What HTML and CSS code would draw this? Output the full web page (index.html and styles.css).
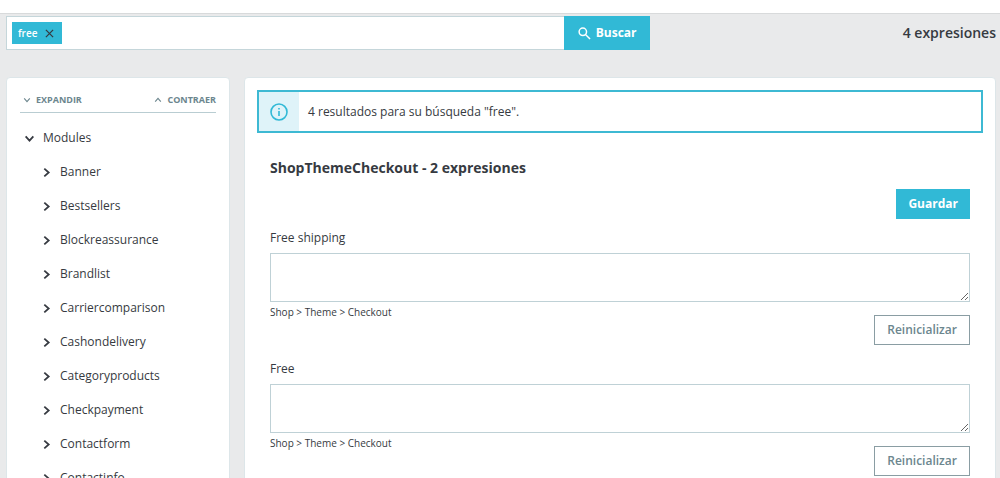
FILE: index.html
```html
<!DOCTYPE html>
<html lang="es">
<head>
    <meta charset="utf-8">
    <meta name="viewport" content="width=device-width, initial-scale=1">
    <title>Traducciones</title>
    <link rel="stylesheet" href="styles.css">
</head>
<body>
    <!-- Shared icon shapes -->
    <svg class="sprite" aria-hidden="true">
        <symbol id="chevron" viewBox="0 0 10 10">
            <path d="M3 1.5 L7 5 L3 8.5"/>
        </symbol>
    </svg>

    <header class="topbar"></header>

    <main class="page">
        <div class="toolbar">
            <form class="search">
                <div class="tags">
                    <span class="tag">free
                        <button type="button" class="tag-close" aria-label="Quitar free">
                            <svg viewBox="0 0 10 10"><path d="M1 1 L9 9 M9 1 L1 9"/></svg>
                        </button>
                    </span>
                    <input class="tags-input" type="text" aria-label="Buscar expresiones">
                </div>
                <button type="button" class="btn btn-primary btn-search">
                    <svg class="icon-search" viewBox="0 0 14 14"><circle cx="5.2" cy="5.2" r="4"/><path d="M8.3 8.3 L13 13"/></svg>
                    Buscar
                </button>
            </form>
            <p class="total">4 expresiones</p>
        </div>

        <div class="columns">
            <nav class="card sidebar">
                <div class="tree-header">
                    <button type="button" class="tree-toggle"><svg class="chevron down"><use href="#chevron"/></svg>Expandir</button>
                    <button type="button" class="tree-toggle"><svg class="chevron up"><use href="#chevron"/></svg>Contraer</button>
                </div>
                <button type="button" class="tree-item"><svg class="chevron down"><use href="#chevron"/></svg>Modules</button>
                <ul class="tree">
                    <li><button type="button" class="tree-item"><svg class="chevron"><use href="#chevron"/></svg>Banner</button></li>
                    <li><button type="button" class="tree-item"><svg class="chevron"><use href="#chevron"/></svg>Bestsellers</button></li>
                    <li><button type="button" class="tree-item"><svg class="chevron"><use href="#chevron"/></svg>Blockreassurance</button></li>
                    <li><button type="button" class="tree-item"><svg class="chevron"><use href="#chevron"/></svg>Brandlist</button></li>
                    <li><button type="button" class="tree-item"><svg class="chevron"><use href="#chevron"/></svg>Carriercomparison</button></li>
                    <li><button type="button" class="tree-item"><svg class="chevron"><use href="#chevron"/></svg>Cashondelivery</button></li>
                    <li><button type="button" class="tree-item"><svg class="chevron"><use href="#chevron"/></svg>Categoryproducts</button></li>
                    <li><button type="button" class="tree-item"><svg class="chevron"><use href="#chevron"/></svg>Checkpayment</button></li>
                    <li><button type="button" class="tree-item"><svg class="chevron"><use href="#chevron"/></svg>Contactform</button></li>
                    <li><button type="button" class="tree-item"><svg class="chevron"><use href="#chevron"/></svg>Contactinfo</button></li>
                </ul>
            </nav>

            <section class="card content">
                <div class="alert">
                    <div class="alert-icon">
                        <svg viewBox="0 0 18 18"><circle cx="9" cy="9" r="8"/><path d="M9 8 V13 M9 5 V6.6"/></svg>
                    </div>
                    <p class="alert-text">4 resultados para su búsqueda "free".</p>
                </div>

                <form class="translations">
                    <h1 class="title">ShopThemeCheckout - 2 expresiones</h1>
                    <div class="actions">
                        <button type="button" class="btn btn-primary">Guardar</button>
                    </div>

                    <div class="field">
                        <label for="free-shipping">Free shipping</label>
                        <textarea id="free-shipping"></textarea>
                        <div class="field-footer">
                            <small>Shop &gt; Theme &gt; Checkout</small>
                            <button type="button" class="btn btn-outline">Reinicializar</button>
                        </div>
                    </div>

                    <div class="field">
                        <label for="free">Free</label>
                        <textarea id="free"></textarea>
                        <div class="field-footer">
                            <small>Shop &gt; Theme &gt; Checkout</small>
                            <button type="button" class="btn btn-outline">Reinicializar</button>
                        </div>
                    </div>
                </form>
            </section>
        </div>
    </main>
</body>
</html>
```
FILE: styles.css
```css
* {
    box-sizing: border-box;
}

body {
    background: #e9eaeb;
    color: #363a41;
    font-family: "Open Sans", sans-serif;
    font-size: 12px;
    height: 100vh;
    line-height: 16px;
    margin: 0;
    overflow: hidden;
}

button,
input,
textarea {
    color: inherit;
    font: inherit;
}

button {
    background: none;
    border: 0;
    cursor: pointer;
    padding: 0;
}

p,
h1,
ul {
    margin: 0;
    padding: 0;
}

svg {
    fill: none;
    flex: none;
    stroke: currentColor;
}

.sprite {
    display: none;
}

.topbar {
    background: #fff;
    border-bottom: 1px solid #d8dadb;
    height: 14px;
}

.page {
    padding: 2px 4px 0 6px;
}

/* Search */

.toolbar {
    align-items: center;
    display: flex;
    justify-content: space-between;
    margin-bottom: 27px;
}

.search {
    display: flex;
    height: 34px;
    width: 65%;
}

.tags {
    align-items: center;
    background: #fff;
    border: 1px solid #c5d6da;
    border-right: 0;
    display: flex;
    flex: 1;
    padding: 0 5px;
}

.tag {
    align-items: center;
    background: #31b9d6;
    color: #fff;
    display: flex;
    font-size: 10px;
    font-weight: 600;
    gap: 8px;
    height: 22px;
    padding: 0 8px 0 6px;
}

.tag-close {
    color: #363a41;
    display: flex;
}

.tag-close svg {
    height: 9px;
    stroke-width: 1.4;
    width: 9px;
}

.tags-input {
    border: 0;
    flex: 1;
    min-width: 0;
    outline: 0;
}

.total {
    font-size: 14px;
    font-weight: 600;
}

/* Buttons */

.btn {
    border: 1px solid transparent;
    font-weight: 600;
    height: 30px;
    padding: 0 12px;
}

.btn-primary {
    background: #31b9d6;
    color: #fff;
    font-weight: 700;
    padding: 0 11px;
}

.btn-outline {
    background: #fff;
    border-color: #8a9da3;
    color: #6c868e;
}

.btn-search {
    align-items: center;
    display: flex;
    gap: 5px;
    height: 34px;
    padding: 0 12px 0 13px;
}

.icon-search {
    height: 13px;
    stroke-width: 1.6;
    width: 13px;
}

/* Columns */

.columns {
    align-items: flex-start;
    display: flex;
    gap: 14px;
}

.card {
    background: #fff;
    border: 1px solid #dde6e9;
    border-radius: 4px;
}

.sidebar {
    flex: none;
    padding: 13px;
    width: 224px;
}

.content {
    flex: 1;
    padding: 12px;
}

/* Tree */

.tree-header {
    border-bottom: 1px solid #b9cdd2;
    display: flex;
    justify-content: space-between;
    margin-bottom: 8px;
    padding-bottom: 3px;
}

.tree-toggle {
    align-items: center;
    color: #6c868e;
    display: flex;
    font-size: 9px;
    font-weight: 700;
    gap: 5px;
    height: 18px;
    padding-left: 3px;
    text-transform: uppercase;
}

.tree-item {
    align-items: center;
    display: flex;
    gap: 8px;
    height: 34px;
    padding-left: 4px;
    width: 100%;
}

.tree {
    list-style: none;
    padding-left: 17px;
}

.chevron {
    height: 11px;
    stroke-width: 1.6;
    width: 11px;
}

.tree-toggle .chevron {
    height: 8px;
    stroke-width: 1.4;
    width: 8px;
}

.down {
    transform: rotate(90deg);
}

.up {
    transform: rotate(-90deg);
}

/* Alert */

.alert {
    border: 2px solid #3db9d3;
    display: flex;
    height: 43px;
}

.alert-icon {
    align-items: center;
    background: #dff3f9;
    color: #31b9d6;
    display: flex;
    justify-content: center;
    width: 40px;
}

.alert-icon svg {
    height: 18px;
    stroke-width: 1.6;
    width: 18px;
}

.alert-text {
    align-self: center;
    padding-left: 9px;
}

/* Translations */

.translations {
    padding: 25px 13px 0;
}

.title {
    font-size: 14px;
    font-weight: 700;
    line-height: 20px;
}

.actions {
    display: flex;
    justify-content: flex-end;
    margin: 11px 0;
}

.field {
    margin-bottom: 16px;
}

.field label {
    display: block;
    margin-bottom: 7px;
}

.field textarea {
    border: 1px solid #bfd1d6;
    display: block;
    height: 49px;
    padding: 6px;
    resize: vertical;
    width: 100%;
}

.field-footer {
    align-items: flex-start;
    display: flex;
    justify-content: space-between;
}

.field-footer small {
    font-size: 10px;
    padding-top: 2px;
}

.field-footer .btn {
    margin-top: 13px;
}
```
